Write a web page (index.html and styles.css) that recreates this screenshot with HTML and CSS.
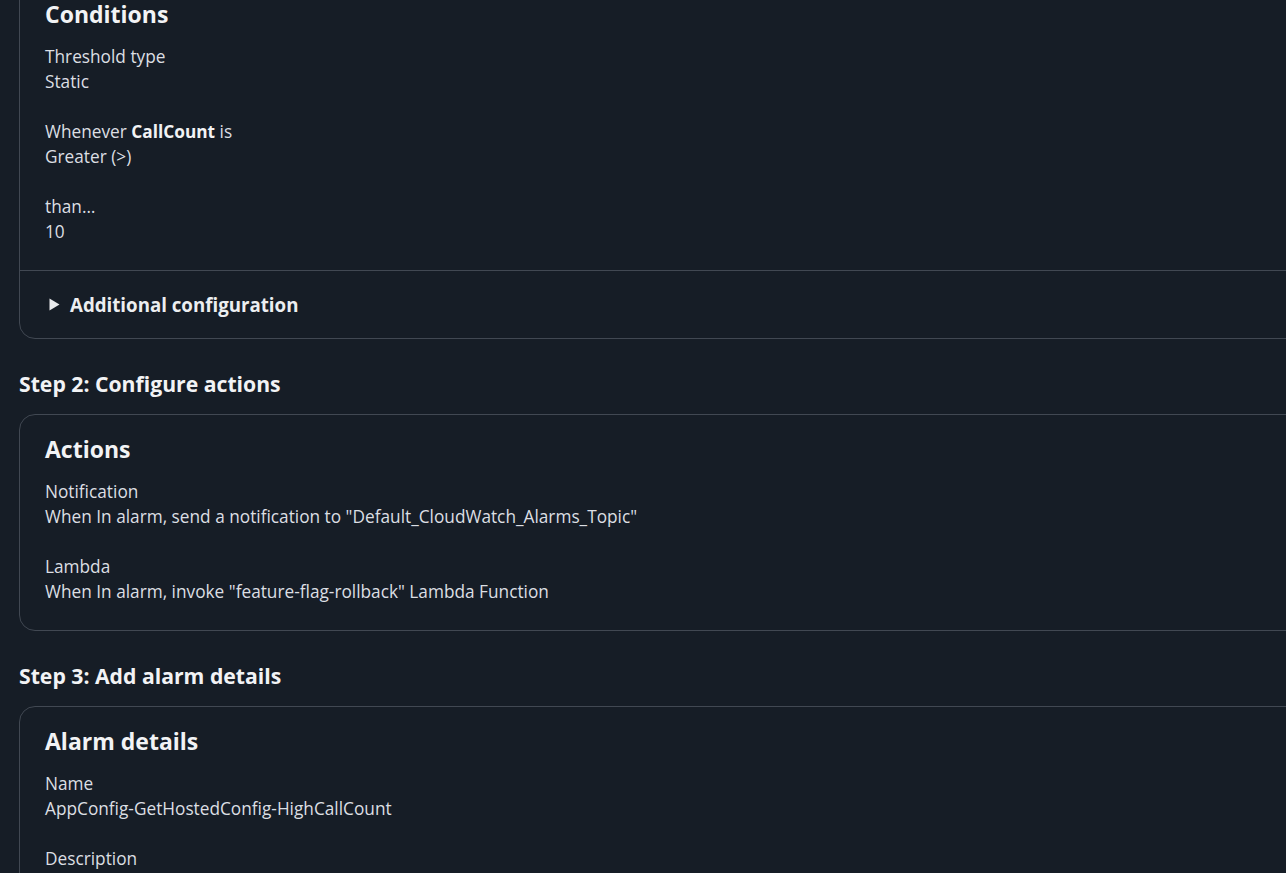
FILE: index.html
```html
<!DOCTYPE html>
<html lang="en">
<head>
<meta charset="utf-8">
<title>Review alarm</title>
<link rel="stylesheet" href="styles.css">
</head>
<body>
<main class="page">
  <section class="card">
    <div class="card-body">
      <h2 class="card-title">Conditions</h2>
      <dl class="kv">
        <div class="kv-item"><dt>Threshold type</dt><dd>Static</dd></div>
        <div class="kv-item"><dt>Whenever <b>CallCount</b> is</dt><dd>Greater (&gt;)</dd></div>
        <div class="kv-item"><dt>than…</dt><dd>10</dd></div>
      </dl>
    </div>
    <div class="card-footer">
      <svg class="caret" width="11" height="13" viewBox="0 0 11 13" aria-hidden="true"><path d="M0.5 0.5 L10.5 6.5 L0.5 12.5 Z" fill="currentColor"/></svg>
      <span class="expand-label">Additional configuration</span>
    </div>
  </section>

  <h3 class="step-title">Step 2: Configure actions</h3>
  <section class="card">
    <div class="card-body">
      <h2 class="card-title">Actions</h2>
      <dl class="kv">
        <div class="kv-item"><dt>Notification</dt><dd>When In alarm, send a notification to "Default_CloudWatch_Alarms_Topic"</dd></div>
        <div class="kv-item"><dt>Lambda</dt><dd>When In alarm, invoke "feature-flag-rollback" Lambda Function</dd></div>
      </dl>
    </div>
  </section>

  <h3 class="step-title">Step 3: Add alarm details</h3>
  <section class="card">
    <div class="card-body">
      <h2 class="card-title">Alarm details</h2>
      <dl class="kv">
        <div class="kv-item"><dt>Name</dt><dd>AppConfig-GetHostedConfig-HighCallCount</dd></div>
        <div class="kv-item"><dt>Description</dt></div>
      </dl>
    </div>
  </section>
</main>
</body>
</html>
```

FILE: styles.css
```css
html, body {
  margin: 0;
  padding: 0;
  background: #161d26;
  overflow: hidden;
  height: 873px;
}

body {
  font-family: "Open Sans", "Noto Sans", sans-serif;
  color: #dcdfe3;
  font-size: 17.25px;
  line-height: 25px;
}

.page {
  padding-left: 19px;
  margin-right: -40px;
  margin-top: -21px;
}

.card {
  border: 1px solid #414852;
  border-radius: 16px;
  background: #161d26;
}

.card-body {
  padding: 19px 25px 26px;
}

.card-title {
  margin: 0 0 15px;
  font-size: 23px;
  line-height: 30px;
  font-weight: 700;
  color: #f2f3f5;
}

.kv {
  margin: 0;
  display: flex;
  flex-direction: column;
  gap: 25px;
}

.kv-item dt, .kv-item dd {
  margin: 0;
}

.kv-item b {
  font-weight: 700;
  color: #f2f3f5;
}

.card-footer {
  border-top: 1px solid #414852;
  height: 67px;
  display: flex;
  align-items: center;
  padding-left: 29px;
  gap: 10px;
  color: #e9ebed;
}

.caret {
  flex: none;
}

.expand-label {
  font-size: 18.7px;
  font-weight: 700;
  color: #eceef0;
}

.step-title {
  margin: 32px 0 17px;
  font-size: 21.2px;
  line-height: 26px;
  font-weight: 700;
  color: #f2f3f5;
}
```
